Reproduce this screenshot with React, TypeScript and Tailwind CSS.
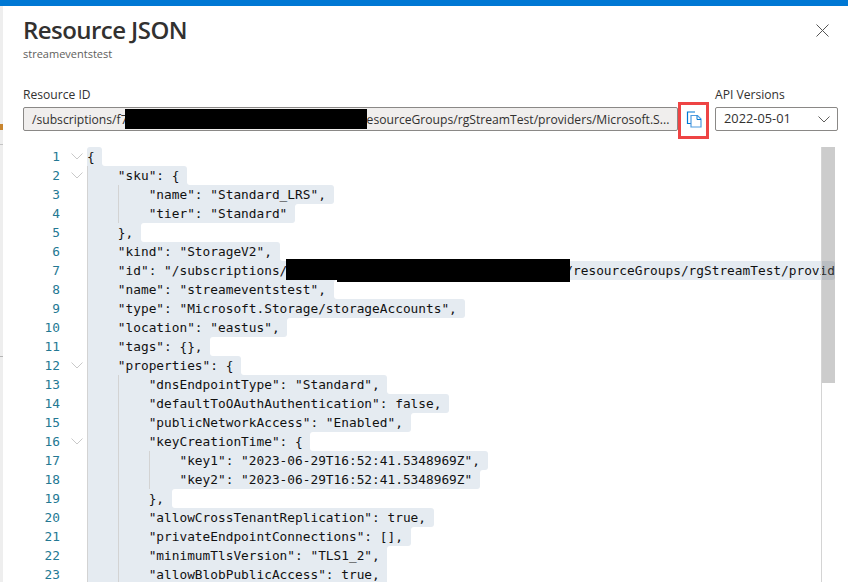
const lines: { t: string; fold?: boolean; guides: number[] }[] = [
  { t: "{", fold: true, guides: [] },
  { t: '    "sku": {', fold: true, guides: [0] },
  { t: '        "name": "Standard_LRS",', guides: [0, 31] },
  { t: '        "tier": "Standard"', guides: [0, 31] },
  { t: "    },", guides: [0] },
  { t: '    "kind": "StorageV2",', guides: [0] },
  { t: '    "id": "/subscriptions/', guides: [0] },
  { t: '    "name": "streameventstest",', guides: [0] },
  { t: '    "type": "Microsoft.Storage/storageAccounts",', guides: [0] },
  { t: '    "location": "eastus",', guides: [0] },
  { t: '    "tags": {},', guides: [0] },
  { t: '    "properties": {', fold: true, guides: [0] },
  { t: '        "dnsEndpointType": "Standard",', guides: [0, 31] },
  { t: '        "defaultToOAuthAuthentication": false,', guides: [0, 31] },
  { t: '        "publicNetworkAccess": "Enabled",', guides: [0, 31] },
  { t: '        "keyCreationTime": {', fold: true, guides: [0, 31] },
  { t: '            "key1": "2023-06-29T16:52:41.5348969Z",', guides: [0, 31, 62] },
  { t: '            "key2": "2023-06-29T16:52:41.5348969Z"', guides: [0, 31, 62] },
  { t: "        },", guides: [0, 31] },
  { t: '        "allowCrossTenantReplication": true,', guides: [0, 31] },
  { t: '        "privateEndpointConnections": [],', guides: [0, 31] },
  { t: '        "minimumTlsVersion": "TLS1_2",', guides: [0, 31] },
  { t: '        "allowBlobPublicAccess": true,', guides: [0, 31] },
];

// line 7 runs past the right edge of the editor
const lineLen = (i: number) => (i === 6 ? 999 : i < 0 ? 0 : lines[i].t.length);

const sans = "font-['Open_Sans',sans-serif]";

function CopyIcon() {
  return (
    <svg width="16" height="17" viewBox="0 0 16 17" fill="none">
      <path d="M9 1H1.5V12.5H5" stroke="#0078d4" strokeWidth="1.2" />
      <path d="M5 4.5H11.5L15 8V16H5V4.5Z" fill="#fff" stroke="#4f9be0" strokeWidth="1.2" />
      <path d="M11 4.5V8.5H15" stroke="#0078d4" strokeWidth="1" />
    </svg>
  );
}

function Chevron({ color, w }: { color: string; w: number }) {
  return (
    <svg width={w} height={w / 2 + 1} viewBox="0 0 12 7" fill="none">
      <path d="M0.5 0.5L6 6L11.5 0.5" stroke={color} strokeWidth="1" />
    </svg>
  );
}

function CodeLine({ i }: { i: number }) {
  const { t, fold, guides } = lines[i];
  const n = i + 1;
  const len = lineLen(i);
  const prev = lineLen(i - 1);
  const next = i === lines.length - 1 ? len : lineLen(i + 1);
  return (
    <div className="relative flex h-[19px] leading-[19px]">
      <div className="w-[37px] shrink-0 text-right text-[#237893]">{n}</div>
      <div className="flex w-[27px] shrink-0 items-center justify-center pl-[6px]">
        {fold && <Chevron color="#c9c9c9" w={12} />}
      </div>
      <div className="relative min-w-0 flex-1 overflow-hidden whitespace-pre text-[#111]">
        <span
          className={`${n === 7 ? "block" : "inline-block pr-[1ch]"} bg-[#e5ebf1] ${prev < len ? "rounded-tr-[3px]" : ""} ${next < len ? "rounded-br-[3px]" : ""} ${n === 1 ? "rounded-tl-[3px]" : ""}`}
        >
          {t}
          {n === 7 && (
            <>
              <span className="inline-block w-[284px]" />
              <span className="ml-[-6px]">/resourceGroups/rgStreamTest/providers/Microsoft.Storage</span>
            </>
          )}
        </span>
        {prev > len && (
          <span className="absolute top-0 size-[3px] bg-[#e5ebf1]" style={{ left: `${len + 1}ch` }}>
            <span className="block size-[3px] rounded-tl-[3px] bg-white" />
          </span>
        )}
        {next > len && (
          <span className="absolute bottom-0 size-[3px] bg-[#e5ebf1]" style={{ left: `${len + 1}ch` }}>
            <span className="block size-[3px] rounded-bl-[3px] bg-white" />
          </span>
        )}
        {guides.map((g) => (
          <div key={g} className="absolute top-0 h-[19px] w-px bg-[#d3d3d3]" style={{ left: g }} />
        ))}
      </div>
      {n === 7 && <div className="absolute left-[263px] top-[-2px] h-[23px] w-[284px] bg-black" />}
    </div>
  );
}

export default function App() {
  return (
    <div className={`flex h-[582px] w-[848px] flex-col overflow-hidden bg-white ${sans}`}>
      <div className="h-[6px] shrink-0 bg-[#0078d4]" />
      <div className="flex min-h-0 flex-1">
        <div className="flex w-[3px] shrink-0 flex-col bg-[#eeeeee]">
          <div className="mt-[118px] h-[6px] bg-[#c8852f]" />
          <div className="mt-[14px] h-px bg-[#c4c4c4]" />
          <div className="mt-[211px] h-px bg-[#b5b5b5]" />
        </div>
        <div className="flex min-w-0 flex-1 flex-col pl-[20px] pr-[10px] pt-[8px]">
          <div className="flex items-start justify-between">
            <div>
              <h1 className="h-[32px] text-[24px] font-semibold leading-[32px] tracking-[-0.55px] text-[#323130]">
                Resource JSON
              </h1>
              <p className="h-[16px] text-[11px] leading-[16px] text-[#605e5c]">streameventstest</p>
            </div>
            <svg className="mr-[9px] mt-[10px]" width="13" height="13" viewBox="0 0 13 13" fill="none">
              <path d="M0.5 0.5L12.5 12.5M12.5 0.5L0.5 12.5" stroke="#555" strokeWidth="1" />
            </svg>
          </div>

          <div className="mt-[24px] flex">
            <div className="w-[692px] shrink-0">
              <label className="block h-[18px] text-[12.1px] leading-[18px] text-[#323130]">Resource ID</label>
              <div className="mt-[3px] flex">
                <div className="flex h-[24px] w-[655px] shrink-0 items-center overflow-hidden whitespace-nowrap rounded-[2px] border border-[#8a8886] bg-[#f0eeed] pl-[8px] pt-[2px] text-[12.15px] text-[#323130]">
                  <span>/subscriptions/f7</span>
                  <span className="ml-[-3px] mt-[-2px] inline-block h-[20px] w-[242px] shrink-0 bg-black" />
                  <span>esourceGroups/rgStreamTest/providers/Microsoft.S...</span>
                </div>
                <div className="relative flex h-[24px] w-[31px] shrink-0 items-center justify-center">
                  <CopyIcon />
                  <div className="absolute left-0 top-[-5px] h-[37px] w-[31px] border-[3px] border-[#ee4444]" />
                </div>
              </div>
            </div>
            <div className="min-w-0 flex-1">
              <label className="block h-[18px] text-[12.1px] leading-[18px] text-[#323130]">API Versions</label>
              <div className="mt-[3px] flex h-[24px] items-center justify-between rounded-[2px] border border-[#8a8886] pl-[8px] pr-[7px] text-[12.8px] text-[#323130]">
                <span>2022-05-01</span>
                <Chevron color="#605e5c" w={12} />
              </div>
            </div>
          </div>

          <div className="relative mr-[3px] mt-[16px] min-h-0 flex-1 overflow-hidden font-['DejaVu_Sans_Mono',monospace] text-[12.8px]">
            {lines.map((_, i) => (
              <CodeLine key={i} i={i} />
            ))}
            <div className="absolute bottom-0 right-0 top-0 w-[14px] border-l border-l-[#d4d4d4]">
              <div className="h-[236px] bg-[rgba(100,100,100,0.33)]" />
            </div>
          </div>
        </div>
      </div>
    </div>
  );
}
